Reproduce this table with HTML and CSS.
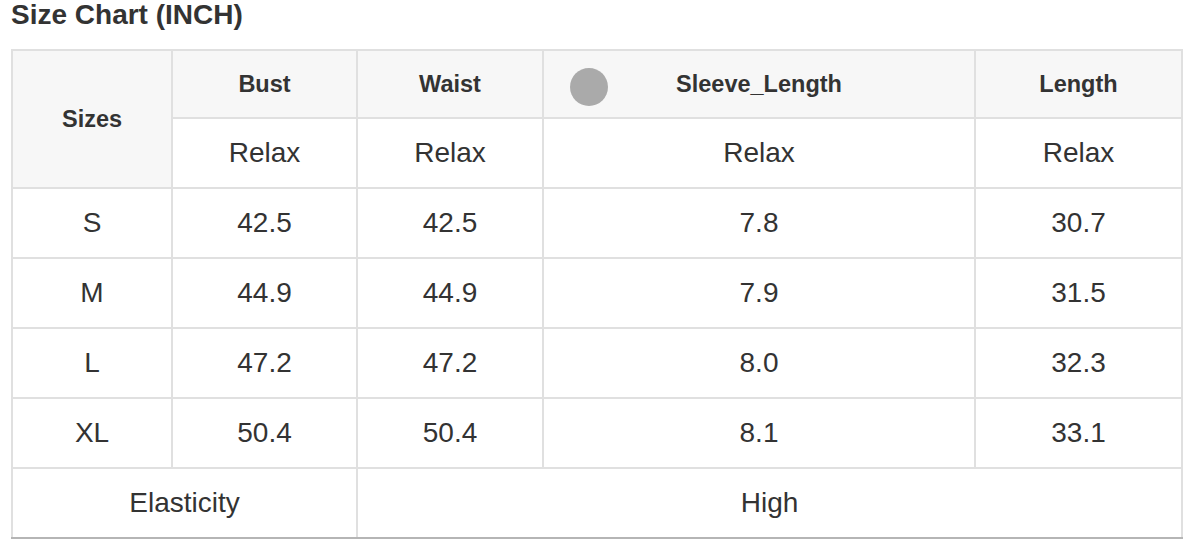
FILE: index.html
```html
<!DOCTYPE html>
<html>
<head>
<meta charset="utf-8">
<link rel="stylesheet" href="styles.css">
</head>
<body>
<h2 class="title">Size Chart (INCH)</h2>
<table class="chart">
  <colgroup>
    <col class="c1"><col class="c2"><col class="c3"><col class="c4"><col class="c5">
  </colgroup>
  <thead>
    <tr class="head-row">
      <th rowspan="2" class="sizes">Sizes</th>
      <th>Bust</th>
      <th>Waist</th>
      <th class="sleeve"><span class="dot"></span>Sleeve_Length</th>
      <th>Length</th>
    </tr>
    <tr class="row">
      <td>Relax</td><td>Relax</td><td>Relax</td><td>Relax</td>
    </tr>
  </thead>
  <tbody>
    <tr class="row"><td>S</td><td>42.5</td><td>42.5</td><td>7.8</td><td>30.7</td></tr>
    <tr class="row"><td>M</td><td>44.9</td><td>44.9</td><td>7.9</td><td>31.5</td></tr>
    <tr class="row"><td>L</td><td>47.2</td><td>47.2</td><td>8.0</td><td>32.3</td></tr>
    <tr class="row"><td>XL</td><td>50.4</td><td>50.4</td><td>8.1</td><td>33.1</td></tr>
    <tr class="row last"><td colspan="2">Elasticity</td><td colspan="3">High</td></tr>
  </tbody>
</table>
</body>
</html>
```

FILE: styles.css
```css
html, body {
  margin: 0;
  padding: 0;
  background: #ffffff;
}
body {
  padding: 0 0 0 11px;
  font-family: "Liberation Sans", Arial, sans-serif;
  color: #333333;
}
.title {
  margin: 0;
  font-size: 28px;
  line-height: 30px;
  font-weight: bold;
  color: #333333;
  height: 49px;
  box-sizing: border-box;
  padding-top: 0;
}
.chart {
  border-collapse: collapse;
  table-layout: fixed;
  width: 1172px;
}
.c1 { width: 160px; }
.c2 { width: 185px; }
.c3 { width: 186px; }
.c4 { width: 432px; }
.c5 { width: 207px; }
.chart th, .chart td {
  border: 2px solid #e0e0e0;
  text-align: center;
  vertical-align: middle;
  padding: 0;
}
.chart th {
  background: #f7f7f7;
  font-size: 23.5px;
  font-weight: bold;
  color: #333333;
}
.chart td {
  font-size: 28px;
  color: #333333;
}
.head-row { height: 68px; }
.row { height: 70px; }
.sleeve {
  position: relative;
}
.dot {
  position: absolute;
  left: 26px;
  top: 17px;
  width: 38px;
  height: 38px;
  border-radius: 50%;
  background: #aaaaaa;
}
.last td {
  border-bottom-color: #b5b5b5;
}
```
